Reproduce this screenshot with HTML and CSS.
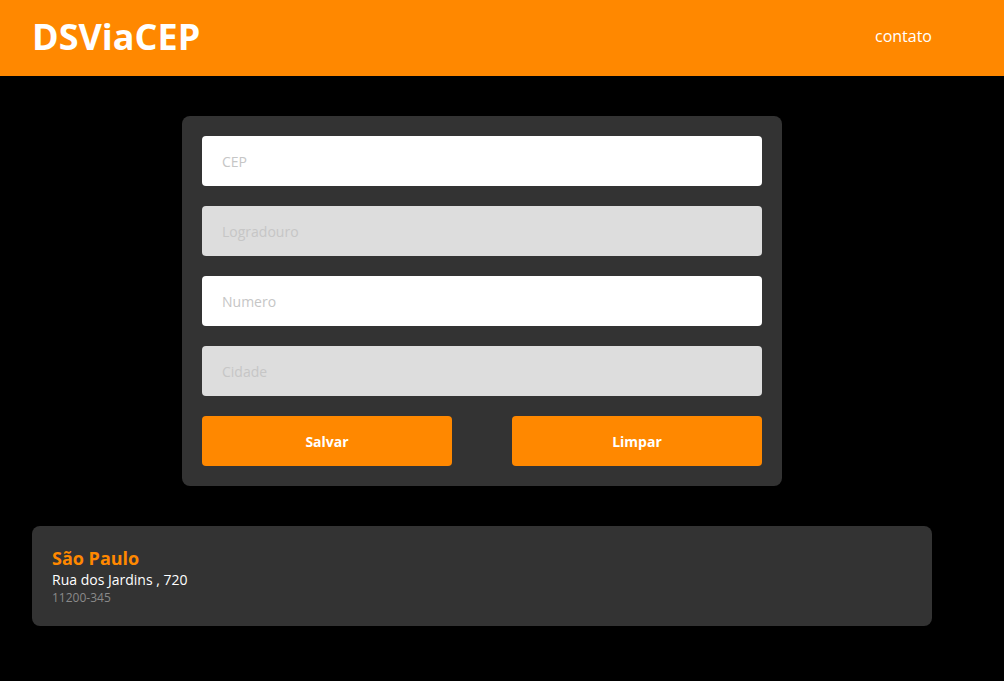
FILE: index.html
```html
<!DOCTYPE html>
<html lang="pt-BR">
<head>
<meta charset="utf-8">
<title>DSViaCEP</title>
<link rel="stylesheet" href="styles.css">
</head>
<body>
<header class="header">
  <div class="container header-inner">
    <h1 class="logo">DSViaCEP</h1>
    <nav class="nav"><a class="nav-link" href="#">contato</a></nav>
  </div>
</header>
<main class="container main">
  <form class="form-card">
    <input class="field" type="text" placeholder="CEP">
    <input class="field field-disabled" type="text" placeholder="Logradouro" disabled>
    <input class="field" type="text" placeholder="Numero">
    <input class="field field-disabled" type="text" placeholder="Cidade" disabled>
    <div class="buttons">
      <button class="btn" type="button">Salvar</button>
      <button class="btn" type="button">Limpar</button>
    </div>
  </form>
  <section class="result-card">
    <h3 class="result-city">São Paulo</h3>
    <p class="result-street">Rua dos Jardins , 720</p>
    <p class="result-cep">11200-345</p>
  </section>
</main>
</body>
</html>
```
FILE: styles.css
```css
* { box-sizing: border-box; }
html, body { margin: 0; padding: 0; }
body {
  background: #000;
  font-family: "Open Sans", "Liberation Sans", sans-serif;
  color: #fff;
}
.container {
  width: 900px;
  margin-left: 32px;
}
.header {
  background: #ff8800;
  height: 76px;
}
.header-inner {
  height: 76px;
  display: flex;
  align-items: center;
  justify-content: space-between;
}
.logo {
  margin: 0;
  font-size: 36px;
  font-weight: 700;
  color: #fff;
  line-height: 1;
  padding-bottom: 2px;
}
.nav {
  padding-bottom: 4px;
}
.nav-link {
  color: #fff;
  text-decoration: none;
  font-size: 16px;
}
.main {
  padding-top: 40px;
  display: flex;
  flex-direction: column;
  align-items: center;
  gap: 40px;
}
.form-card {
  width: 600px;
  background: #333;
  border-radius: 8px;
  padding: 20px;
  display: flex;
  flex-direction: column;
  gap: 20px;
}
.field {
  width: 100%;
  height: 50px;
  border: none;
  border-radius: 4px;
  padding: 0 20px;
  font-family: "Open Sans", "Liberation Sans", sans-serif;
  font-size: 14px;
  background: #fff;
  color: #333;
  outline: none;
}
.field::placeholder { color: #c6c6c6; }
.field-disabled { background: #dddddd; }
.field-disabled::placeholder { color: #c6c6c6; }
.buttons {
  display: flex;
  justify-content: space-between;
}
.btn {
  width: 250px;
  height: 50px;
  border: none;
  border-radius: 4px;
  background: #ff8800;
  color: #fff;
  font-family: "Open Sans", "Liberation Sans", sans-serif;
  font-size: 14px;
  font-weight: 700;
  cursor: pointer;
}
.result-card {
  width: 900px;
  height: 100px;
  background: #333;
  border-radius: 8px;
  padding: 20px;
}
.result-city {
  margin: 0;
  color: #ff8800;
  font-size: 18px;
  font-weight: 700;
  line-height: 24px;
}
.result-street {
  margin: 0;
  font-size: 14px;
  line-height: 20px;
  color: #fff;
}
.result-cep {
  margin: 0;
  font-size: 12px;
  line-height: 16px;
  color: #8a8a8a;
}
```
